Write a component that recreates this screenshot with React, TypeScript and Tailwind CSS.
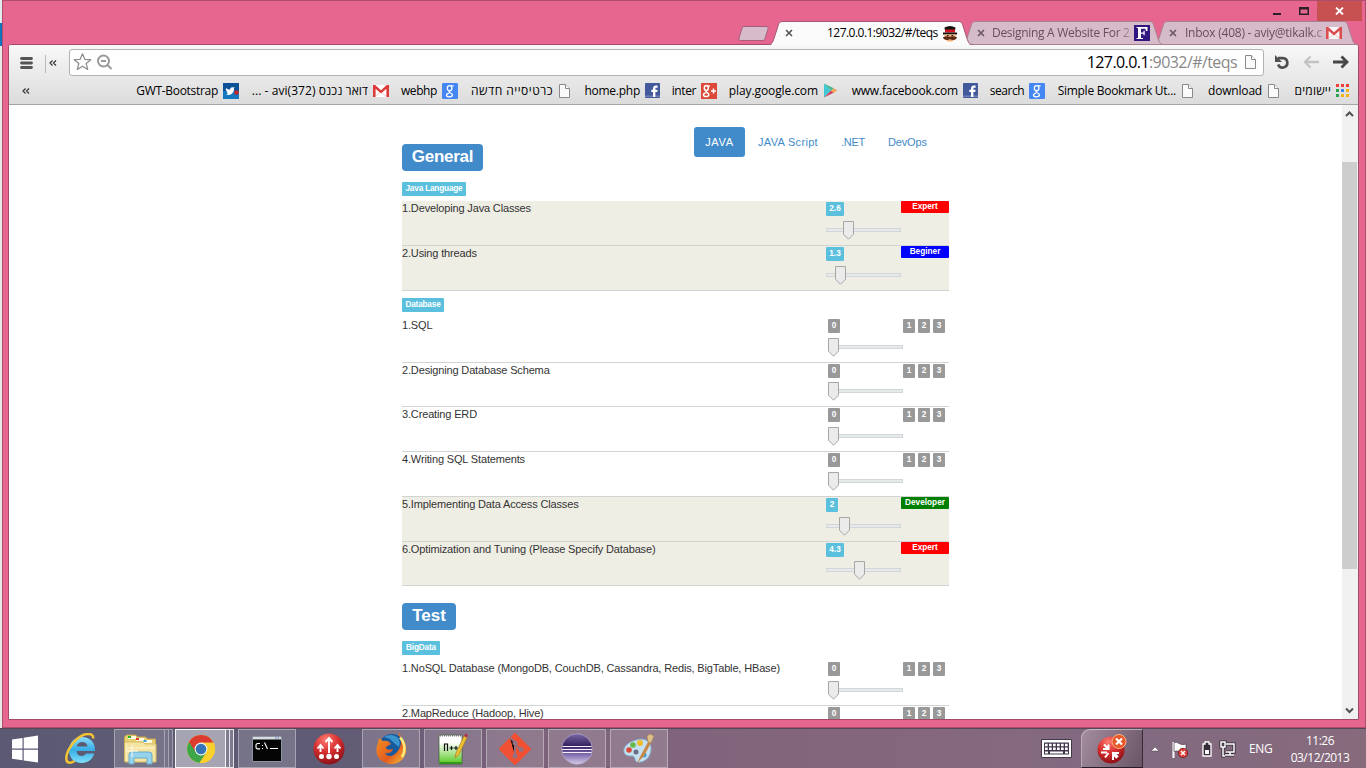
import type { ReactNode } from "react";

const UI = "font-['Open_Sans','Noto_Sans',sans-serif]";
const ARIAL = "font-['Liberation_Sans',sans-serif]";

/* ---------- small icons ---------- */

const PageIcon = () => (
  <svg width="13" height="16" viewBox="0 0 13 16">
    <path d="M1.5 1.5h6l4 4v9h-10z" fill="#fafafa" stroke="#8a8a8a" />
    <path d="M7.5 1.5v4h4" fill="#fff" stroke="#8a8a8a" />
  </svg>
);

const Gmail = ({ faded = false }: { faded?: boolean }) => (
  <svg width="16" height="12" viewBox="0 0 16 12" opacity={faded ? 0.85 : 1}>
    <rect width="16" height="12" fill="#fff" />
    <path d="M0 0h2.2L8 5.3 13.800 0H16v12h-2.600V3.700L8 8.400 2.600 3.700V12H0z" fill="#dd3a3a" />
    <path d="M3 11.500l3.600-3.800M13 11.500L9.400 7.700" stroke="#f0b7b7" strokeWidth=".8" />
  </svg>
);

const GoogleG = () => (
  <svg width="16" height="16" viewBox="0 0 16 16">
    <rect width="16" height="16" rx="1.200" fill="#4486f4" />
    <g fill="none" stroke="#fff" strokeWidth="1.300">
      <ellipse cx="7.600" cy="5.200" rx="2.300" ry="2.500" />
      <path d="M9 2.800h2.600M8 7.900c-1.500.8-1 1.600.5 2.100 2.600.8 2.700 3.700-.8 3.800-4 .1-4.200-3 -.9-3.500" />
    </g>
  </svg>
);

const GooglePlus = () => (
  <svg width="16" height="16" viewBox="0 0 16 16">
    <rect width="16" height="16" fill="#db4a38" />
    <g fill="none" stroke="#fff" strokeWidth="1.500">
      <ellipse cx="5.300" cy="5" rx="2" ry="2.500" />
      <path d="M6.500 3h2.300M5.800 7.700c-1.500.8-1 1.600.4 2.100 2.400.8 2.300 3.600-.8 3.700-3.600.1-3.800-2.900-.8-3.400M10 8h5M12.500 5.500v5" />
    </g>
  </svg>
);

const Facebook = () => (
  <svg width="15" height="15" viewBox="0 0 15 15">
    <rect width="15" height="15" rx=".8" fill="#42599b" />
    <rect y="12.500" width="15" height="1.500" fill="#7082b5" />
    <path d="M8 14V9H6.300V6.800H8V5.300C8 3.300 9.300 2.500 11 2.500h1.600v2.200h-1.300c-.7 0-.9.300-.9.900v1.200h2.200L12.300 9h-1.900v5z" fill="#fff" />
  </svg>
);

const Play = () => (
  <svg width="15" height="15" viewBox="0 0 15 15">
    <path d="M1 .5L8 7.500 1 14.500z" fill="#42c6d4" />
    <path d="M1 .5l9.700 4.700L8 7.500z" fill="#42b98f" />
    <path d="M1 14.500l9.700-4.700L8 7.500z" fill="#cf4561" />
    <path d="M10.700 5.200L14.500 7.500l-3.800 2.300L8 7.500z" fill="#f4a456" />
  </svg>
);

const Twitter = () => (
  <svg width="16" height="16" viewBox="0 0 16 16">
    <rect width="16" height="16" fill="#0b5396" />
    <path d="M0 8h16v8H0z" fill="#1577bd" />
    <path d="M3 5c1.500 1.400 2.800 1.700 4.200 1.600C7.200 5 8.500 4 10 4.500l1.800-.2-.8 1.300c.3 3.600-2.300 6.400-5.500 6.400L3 11.500l2-.9-1.500-1.500 1-.2C3 8 2.500 6.500 3 5z" fill="#fff" />
    <circle cx="13.500" cy="9.500" r="2.300" fill="#c3262e" />
  </svg>
);

const Apps = () => (
  <svg width="14" height="14" viewBox="0 0 14 14">
    <path d="M0 0h3v3H0zM5 0h3v3H5zM10 0h3v3h-3z" fill="#ef3f36" />
    <path d="M0 5h3v3H0zM0 10h3v3H0z" fill="#2aa052" />
    <path d="M5 5h3v3H5z" fill="#3a86f0" />
    <path d="M10 5h3v3h-3zM5 10h3v3H5zM10 10h3v3h-3z" fill="#f5b318" />
  </svg>
);

const Mustache = () => (
  <svg width="16" height="17" viewBox="0 0 16 17">
    <path d="M2.500 2.500Q8-.5 13.500 2.500l-.7 4.500H3.200z" fill="#151010" />
    <path d="M3 4.500h10v3H3z" fill="#d01723" />
    <path d="M1 7.500h14v2H1z" fill="#151010" />
    <path d="M2.500 9.500h11V14L10 16.500H6L2.500 14z" fill="#f2b077" />
    <path d="M8 12c-2-1.500-4 0-7 0 0 3 5 4 7 2 2 2 7 1 7-2-3 0-5-1.500-7 0z" fill="#5b2a17" />
    <path d="M5 10.500h1.500M9.500 10.500H11" stroke="#222" />
  </svg>
);

const TabClose = ({ color }: { color: string }) => (
  <svg width="8" height="8" viewBox="0 0 8 8" className="shrink-0">
    <path d="M1 1l6 6M7 1L1 7" stroke={color} strokeWidth="1.600" />
  </svg>
);

/* ---------- window frame ---------- */

const TabShape = ({ w, fill, stroke, open = false }: { w: number; fill: string; stroke: string; open?: boolean }) => (
  <svg className="absolute inset-0 -z-10" width={w} height="24" viewBox={`0 0 ${w} 24`}>
    <path
      d={`M0 23.500C4 23.500 4.500 21.500 6 17.500L10 5C11 1.500 12 .5 15 .5H${w - 15}C${w - 12} .5 ${w - 11} 1.500 ${w - 10} 5L${w - 6} 17.500C${w - 4.5} 21.500 ${w - 4} 23.500 ${w} 23.500${open ? "" : "z"}`}
      fill={fill}
      stroke={stroke}
    />
    {open && <path d={`M4 23.500H${w - 4}`} stroke={fill} />}
  </svg>
);

const TabStrip = () => (
  <div className={`flex h-6 justify-end text-[12px] ${UI}`}>
    <svg width="34" height="18" viewBox="0 0 34 18" className="-mr-[3px] mt-1">
      <path d="M8 1.500h21c2 0 2.500 1 2 2.500L28 13.500c-.5 1.500-1 2-3 2H4c-2 0-2.500-1-2-2.500L5 3.500C5.500 2 6 1.500 8 1.500z" fill="#d6bccb" stroke="#a75f7d" />
    </svg>
    <div className="relative z-20 flex h-6 w-[205px] items-center pl-[17px] text-black">
      <TabShape w={205} fill="#fbfbfb" stroke="#a45877" open />
      <TabClose color="#555" />
      <span className="ml-[34px] w-[112px] whitespace-nowrap tracking-[-0.53px]">127.0.0.1:9032/#/teqs</span>
      <span className="ml-[3px]"><Mustache /></span>
    </div>
    <div className="relative z-10 -ml-3 flex h-6 w-[203px] items-center pl-4 text-[#6c4c5c]">
      <TabShape w={203} fill="#d6bccb" stroke="#a9808f" />
      <TabClose color="#6c5561" />
      <span className="ml-[7px] w-[141px] whitespace-nowrap tracking-[-0.3px] [mask-image:linear-gradient(to_right,black_125px,transparent_146px)]">Designing A Website For 2</span>
      <svg width="16" height="16" viewBox="0 0 16 16" className="ml-px">
        <rect width="16" height="16" fill="#321680" />
        <path d="M2.500 2h11v4h-1.500l-.7-2.200H7v3.600h2.500V5.800h1.200v4.500H9.500V8.800H7V13h2v1H2.500v-1H4V3H2.500z" fill="#fff" />
      </svg>
    </div>
    <div className="relative z-0 -ml-[11px] flex h-6 w-[205px] items-center pl-4 text-[#6c4c5c]">
      <TabShape w={205} fill="#d6bccb" stroke="#a9808f" />
      <TabClose color="#6c5561" />
      <span className="ml-2 w-[139px] whitespace-nowrap tracking-[-0.24px] [mask-image:linear-gradient(to_right,black_125px,transparent_146px)]">Inbox (408) - aviy@tikalk.c</span>
      <span className="ml-[2px]"><Gmail faded /></span>
    </div>
  </div>
);

const TitleBar = () => (
  <div className="-mr-1 flex h-5 items-start justify-end">
    <svg width="56" height="20" viewBox="0 0 56 20">
      <path d="M12 12h8v2h-8z" fill="#2b2028" />
      <path d="M38 6h10v8H38z M39.500 8.500v4h7v-4z" fill="#2b2028" fillRule="evenodd" />
    </svg>
    <div className="flex h-5 w-[45px] items-center justify-center bg-[#c75050]">
      <svg width="9" height="8" viewBox="0 0 9 8"><path d="M1 .5l7 7M8 .5l-7 7" stroke="#fff" strokeWidth="1.800" /></svg>
    </div>
  </div>
);

const Toolbar = () => (
  <div className="flex h-[33px] items-center">
    <svg width="60" height="32" viewBox="0 0 60 32" className="shrink-0">
      <path d="M12.500 12.500h10M12.500 17h10M12.500 21.500h10" stroke="#555" strokeWidth="2.800" strokeLinecap="round" />
      <path d="M36.500 9v18" stroke="#bbb" />
      <path d="M43.500 14.500l-2.500 2.500 2.500 2.500M47 14.500l-2.500 2.500 2.500 2.500" stroke="#333" strokeWidth="1.200" fill="none" />
    </svg>
    <div className="mt-px flex h-[27px] w-[1195px] items-center rounded-[3px] border border-[#b3b3b3] bg-white">
      <svg width="44" height="24" viewBox="0 0 44 24">
        <path d="M12.500 3.800l2.300 5.500 6 .4-4.600 3.800 1.500 5.900-5.200-3.200-5.200 3.200 1.500-5.900-4.600-3.800 6-.4z" fill="#fff" stroke="#8b8b8b" strokeWidth="1.200" strokeLinejoin="round" />
        <circle cx="33.500" cy="11" r="5.500" fill="none" stroke="#999" strokeWidth="2" />
        <path d="M31 11h5M37.500 15l4 4" stroke="#999" strokeWidth="2" />
      </svg>
      <span className={`ml-auto mr-[7px] whitespace-nowrap text-[16px] tracking-[-0.58px] text-[#888] ${UI}`}>
        <span className="text-black">127.0.0.1</span>:9032/#/teqs
      </span>
      <span className="mr-1.5"><PageIcon /></span>
    </div>
    <svg width="84" height="30" viewBox="0 0 84 30" className="ml-[5px] shrink-0">
      <path d="M9 11.200h4.800a4.700 4.700 0 1 1-4.600 6.300" fill="none" stroke="#505050" strokeWidth="2.700" />
      <path d="M6 8v7h7z" fill="#505050" />
      <path d="M50 15H36M41.500 9.500L36 15l5.500 5.500" fill="none" stroke="#c3c3c3" strokeWidth="2.300" />
      <path d="M64 15h13M72.500 9.500L78 15l-5.500 5.500" fill="none" stroke="#474747" strokeWidth="2.800" />
    </svg>
  </div>
);

type Bookmark = { text: string; icon: ReactNode; cls: string };
const bookmarks: Bookmark[] = [
  { text: "GWT-Bootstrap", icon: <Twitter />, cls: "w-[130px] tracking-[-0.3px]" },
  { text: "... - avi(372) דואר נכנס", icon: <Gmail />, cls: "w-[150px] tracking-[0.07px]" },
  { text: "webhp", icon: <GoogleG />, cls: "w-[69px] tracking-[-0.4px]" },
  { text: "כרטיסייה חדשה", icon: <PageIcon />, cls: "w-[113px] tracking-[0.5px]" },
  { text: "home.php", icon: <Facebook />, cls: "w-[89px] tracking-[-0.25px]" },
  { text: "inter", icon: <GooglePlus />, cls: "w-[57px] tracking-[-0.4px]" },
  { text: "play.google.com", icon: <Play />, cls: "w-[121px] tracking-[-0.1px]" },
  { text: "www.facebook.com", icon: <Facebook />, cls: "w-[140px] tracking-[-0.2px]" },
  { text: "search", icon: <GoogleG />, cls: "w-[67px] tracking-[-0.5px]" },
  { text: "Simple Bookmark Ut...", icon: <PageIcon />, cls: "w-[149px] tracking-[-0.27px]" },
  { text: "download", icon: <PageIcon />, cls: "w-[86px] tracking-[-0.2px]" },
  { text: "יישומים", icon: <Apps />, cls: "w-[70px] tracking-[0.2px]" },
];

const BookmarkBar = () => (
  <div className={`flex h-[26px] items-center pb-px text-[12px] text-black ${UI}`}>
    <svg width="100" height="20" viewBox="0 0 100 20" className="shrink-0">
      <path d="M16.500 7.500L14 10l2.500 2.500M20 7.500L17.500 10l2.500 2.500" stroke="#333" strokeWidth="1.200" fill="none" />
    </svg>
    {bookmarks.map((b) => (
      <div key={b.text} className={`flex shrink-0 items-center justify-end gap-[5px] whitespace-nowrap ${b.cls}`}>
        <span>{b.text}</span>
        <span className="shrink-0">{b.icon}</span>
      </div>
    ))}
  </div>
);

/* ---------- page content ---------- */

type Level = { label: string; cls: string };
const EXPERT: Level = { label: "Expert", cls: "bg-[#f00]" };
const BEGINER: Level = { label: "Beginer", cls: "bg-[#00f]" };
const DEVELOPER: Level = { label: "Developer", cls: "bg-[#008000]" };

type Skill = { text: string; value?: string; level?: Level; thumb?: string; short?: boolean };

const javaSkills: Skill[] = [
  { text: "1.Developing Java Classes", value: "2.6", level: EXPERT, thumb: "ml-[17px]" },
  { text: "2.Using threads", value: "1.3", level: BEGINER, thumb: "ml-[9px]" },
];
const dbSkills: Skill[] = [
  { text: "1.SQL" },
  { text: "2.Designing Database Schema", short: true },
  { text: "3.Creating ERD" },
  { text: "4.Writing SQL Statements" },
  { text: "5.Implementing Data Access Classes", value: "2", level: DEVELOPER, thumb: "ml-[13px]" },
  { text: "6.Optimization and Tuning (Please Specify Database)", value: "4.3", level: EXPERT, thumb: "ml-[28px]", short: true },
];
const bigSkills: Skill[] = [
  { text: "1.NoSQL Database (MongoDB, CouchDB, Cassandra, Redis, BigTable, HBase)" },
  { text: "2.MapReduce (Hadoop, Hive)" },
];

const Slider = ({ thumb }: { thumb?: string }) => (
  <div className="grid h-[19px] w-[75px]">
    <div className="col-start-1 row-start-1 mt-[7px] h-1 border border-[#d3d6d9] bg-[#e6eaea]" />
    <svg width="11" height="19" viewBox="0 0 11 19" className={`z-10 col-start-1 row-start-1 ${thumb ?? ""}`}>
      <path d="M.5.500h10v12.700l-5 5-5-5z" fill="#ebebeb" stroke="#a6a6a6" />
    </svg>
  </div>
);

const tiny = "flex h-[14px] items-center justify-center rounded-[1px] pt-px text-[8.250px] font-bold leading-none text-white";

const Row = ({ s }: { s: Skill }) => {
  const on = !!s.level;
  return (
    <div className={`flex shrink-0 items-start border-b border-[#d2d3d3] ${s.short ? "h-[44px]" : "h-[45px]"} ${on ? "bg-[#efeee5]" : ""}`}>
      <div className="w-[424px] whitespace-nowrap pt-px text-[11px] leading-[13px] tracking-[-0.15px] text-[#333]">{s.text}</div>
      <div className={`flex w-[75px] flex-col pt-px ${on ? "" : "ml-0.5"} ${s.short ? "gap-1" : "gap-[5px]"}`}>
        <div className={`${tiny} ${on ? "bg-[#5bc0de]" : "bg-[#999]"} ${s.value && s.value.length > 1 ? "w-[18px]" : "w-3"}`}>{s.value ?? "0"}</div>
        <Slider thumb={s.thumb} />
      </div>
      {s.level ? (
        <div className={`flex h-3 w-12 items-center justify-center rounded-[1px] pt-px text-[8.250px] font-bold leading-none text-white ${s.level.cls}`}>{s.level.label}</div>
      ) : (
        <div className="flex gap-[3px] pt-px">
          {["1", "2", "3"].map((n) => (
            <div key={n} className={`${tiny} w-3 bg-[#999]`}>{n}</div>
          ))}
        </div>
      )}
    </div>
  );
};

const Heading = ({ children, cls }: { children: string; cls: string }) => (
  <h2 className={`flex h-[27px] shrink-0 items-center justify-center rounded-[4px] bg-[#428bca] pb-0.5 text-[17px] font-bold leading-none text-white ${cls}`}>{children}</h2>
);
const Category = ({ children, cls }: { children: string; cls: string }) => (
  <div className={`${tiny} shrink-0 bg-[#5bc0de] tracking-[-0.2px] ${cls}`}>{children}</div>
);

const Content = () => (
  <div className={`ml-[393px] flex h-[614px] w-[547px] flex-col overflow-hidden ${ARIAL}`}>
    <div className="flex h-[90px] shrink-0 justify-between">
      <div className="pt-[39px]"><Heading cls="w-[81px] tracking-[-0.25px]">General</Heading></div>
      <nav className="mr-[22px] mt-[22px] flex h-[30px] items-center text-[11px] text-[#428bca]">
        <span className="flex h-[30px] w-[51px] items-center justify-center rounded-[3px] bg-[#428bca] tracking-[0.7px] text-white">JAVA</span>
        <span className="ml-[13px] w-[61px] whitespace-nowrap tracking-[0.32px]">JAVA Script</span>
        <span className="ml-[22px] w-[25px] tracking-[-0.3px]">.NET</span>
        <span className="ml-[22px] w-[39px] tracking-[-0.15px]">DevOps</span>
      </nav>
    </div>
    <Category cls="-mt-[13px] w-16">Java Language</Category>
    <div className="mt-[5px] flex shrink-0 flex-col">
      {javaSkills.map((s) => <Row key={s.text} s={s} />)}
    </div>
    <Category cls="mt-[7px] w-[42px]">Database</Category>
    <div className="mt-1.5 flex shrink-0 flex-col">
      {dbSkills.map((s) => <Row key={s.text} s={s} />)}
    </div>
    <Heading cls="mt-[17px] w-[54px]">Test</Heading>
    <Category cls="mt-[11px] w-[38px]">BigData</Category>
    <div className="mt-1.5 flex shrink-0 flex-col">
      {bigSkills.map((s) => <Row key={s.text} s={s} />)}
    </div>
  </div>
);

const Scrollbar = () => (
  <div className="ml-auto flex w-4 flex-col items-center bg-[#f1f1f1]">
    <svg width="16" height="17" viewBox="0 0 16 17"><path d="M4 11l3.500-3.500L11 11" fill="none" stroke="#505050" strokeWidth="2" /></svg>
    <div className="mt-[40px] h-[407px] w-[15px] self-start bg-[#cdcdcd]" />
    <svg width="16" height="17" viewBox="0 0 16 17" className="mt-auto"><path d="M4 6.500l3.500 3.500L11 6.500" fill="none" stroke="#505050" strokeWidth="2" /></svg>
  </div>
);

/* ---------- taskbar ---------- */

const WinLogo = () => (
  <svg width="28" height="28" viewBox="0 0 28 28">
    <path d="M1 4.500l10.500-1.600v10.600H1zM12.700 2.700L27 .5v13H12.700zM1 14.700h10.500v10.600L1 23.700zM12.700 14.700H27v12.800l-14.300-2.100z" fill="#fff" />
  </svg>
);

const IE = () => (
  <svg width="32" height="32" viewBox="0 0 32 32">
    <defs><linearGradient id="ie" x1="0" y1="0" x2="0" y2="1"><stop offset="0" stopColor="#8ddcfb" /><stop offset=".5" stopColor="#35aee8" /><stop offset="1" stopColor="#7fe0f8" /></linearGradient></defs>
    <path d="M30 18H11.500c.2 3.300 2.300 5 5 5 2.200 0 3.700-.9 4.500-2.500h8.200C27.500 26.500 23 30 16.700 30 9 30 4 24.500 4 17.200 4 9.500 9.500 4 17 4c8 0 13.500 5.500 13 14zM22.500 13.500c-.3-2.700-2.200-4.400-5.200-4.400-3 0-5 1.700-5.600 4.400z" fill="url(#ie)" />
    <path d="M28 5.500C29.500-.5 19-.5 12 6 4 13 .5 22 1.500 27c.8 4 5 3 8 1" fill="none" stroke="#f5c432" strokeWidth="2.500" />
  </svg>
);

const Explorer = () => (
  <svg width="34" height="32" viewBox="0 0 34 32">
    <path d="M1.500 4l2-2h9l2 2h8l2 2h8v22H1.500z" fill="#e8cf73" stroke="#c9a94c" />
    <path d="M5 3h8v3H5zM13 5h8v3h-8zM20 7h9v3h-9z" fill="#fffbe5" />
    <path d="M5 3h3v2H5z" fill="#22b323" /><path d="M13 5h3v2h-3z" fill="#e23b31" /><path d="M20.500 7h3v2h-3z" fill="#32a0df" />
    <path d="M2 9h18l2 2h11v18H2z" fill="#f5e4a1" stroke="#d9bd65" />
    <path d="M3 10v18M3 15h29" stroke="#fff7ce" />
    <path d="M6 31V22q0-3 3-3h17q3 0 3 3v9h-5v-6H11v6z" fill="#95d4ec" stroke="#6ba9ca" />
    <path d="M9 12v12M4 18h11" stroke="#fff" strokeWidth=".9" />
  </svg>
);

const Chrome = () => (
  <svg width="30" height="30" viewBox="0 0 30 30">
    <circle cx="15" cy="15" r="14" fill="#f9ce27" />
    <path d="M2.900 8A14 14 0 0 1 27.500 8.800H15L9 18.500z" fill="#dc3b30" />
    <path d="M2.900 8A14 14 0 0 0 13.500 28.900l6.600-10L9.500 17.500z" fill="#3fa549" />
    <path d="M15 8.800h12.500a14 14 0 0 1-14 20.100l6.600-10z" fill="#fad02c" />
    <circle cx="15" cy="15" r="6.400" fill="#f3f3ed" /><circle cx="15" cy="15" r="5.300" fill="#3674b8" />
  </svg>
);

const Cmd = () => (
  <svg width="30" height="26" viewBox="0 0 30 26">
    <path d="M.5.500h29v25H.5z" fill="#050505" stroke="#8b93a0" />
    <path d="M1 1h28v2.500H1z" fill="#d8dce3" /><path d="M23 2h1.500M25.500 2H27" stroke="#5575ba" />
    <path d="M8 7.500H5.200L4 8.700v3l1.200 1.200H8M10.500 9v1M10.500 12v1M12.500 6.500l3 6.500M18 12.500h8" stroke="#fff" fill="none" strokeWidth="1.100" />
  </svg>
);

const RedBall = () => (
  <svg width="34" height="34" viewBox="0 0 34 34">
    <defs><radialGradient id="rb" cx=".4" cy=".2" r=".8"><stop offset="0" stopColor="#fb7d72" /><stop offset=".5" stopColor="#d92f30" /><stop offset="1" stopColor="#8d1118" /></radialGradient></defs>
    <circle cx="17" cy="17" r="15.500" fill="url(#rb)" />
    <path d="M17 21V7M13.500 10L17 6l3.500 4M8.500 20v-6M5.500 16.500l3-3.500 3 3.500M25.500 20v-6M22.500 16.500l3-3.500 3 3.500" stroke="#fff" strokeWidth="1.900" fill="none" />
    <g fill="#fff"><circle cx="9.500" cy="24.500" r="2.500" /><circle cx="17" cy="24.500" r="2.700" /><circle cx="24.500" cy="24.500" r="2.500" /></g>
  </svg>
);

const Firefox = () => (
  <svg width="32" height="32" viewBox="0 0 32 32">
    <defs><linearGradient id="ff" x1="0" y1="0" x2="1" y2="1"><stop offset="0" stopColor="#f49a25" /><stop offset=".6" stopColor="#e35b1f" /><stop offset="1" stopColor="#f8c83b" /></linearGradient></defs>
    <circle cx="17" cy="14" r="13" fill="#17599d" />
    <path d="M9 4q7-4 13 0 4 4 2 10l-5-4-4-4z" fill="#4aa9dc" opacity=".75" />
    <path d="M24 3c8 5 9 15 5 21-4 7-13 9-20 5C1 25 0 17 3 10l1-5 4 3c4-1 6 0 8 3l-5 3c0 3 3 3 7 2-1 4-5 5-8 4 2 4 8 4 12-1 5-5 5-14 2-21z" fill="url(#ff)" />
    <path d="M25 4.500c5 5 6 13 2 19.500" stroke="#fbe97d" strokeWidth="2.500" fill="none" />
  </svg>
);

const Notepad = () => (
  <svg width="30" height="32" viewBox="0 0 30 32">
    <defs><linearGradient id="np" x1="0" y1="0" x2="0" y2="1"><stop offset=".25" stopColor="#fff" /><stop offset="1" stopColor="#55c91f" /></linearGradient></defs>
    <path d="M1 2h23v29H1z" fill="url(#np)" stroke="#3c5a37" strokeWidth=".7" />
    <path d="M2 2.500h21" stroke="#777" strokeWidth="2" strokeDasharray="1 1" />
    <path d="M2 30h21" stroke="#32961b" strokeWidth="2" />
    <path d="M6.500 18v-7h3v7M11.500 15h4M13.500 13v4M16 15h4M18 13v4" stroke="#111" strokeWidth="1.200" fill="none" />
    <path d="M17 25l1-5L26 3l3 1.500-8 17z" fill="#edc133" stroke="#af7c1e" strokeWidth=".7" />
    <path d="M26 3l1.500-2.500L30 2l-1 2.500z" fill="#b2334a" />
  </svg>
);

const Git = () => (
  <svg width="34" height="34" viewBox="0 0 34 34">
    <path d="M17 2L32 17 17 32 2 17z" fill="#f05033" stroke="#f05033" strokeWidth="2" strokeLinejoin="round" />
    <path d="M12 5.500L17 10.500v13M17 12l6 6" stroke="#96707f" strokeWidth="2" />
    <g fill="#96707f"><circle cx="17" cy="11" r="2.500" /><circle cx="17" cy="24" r="2.500" /><circle cx="23" cy="17.500" r="2.500" /></g>
  </svg>
);

const Eclipse = () => (
  <svg width="32" height="32" viewBox="0 0 32 32">
    <defs><linearGradient id="ec" x1="0" y1="0" x2="0" y2="1"><stop offset="0" stopColor="#7a6aa5" /><stop offset=".4" stopColor="#34205f" /><stop offset=".6" stopColor="#6c549f" /><stop offset="1" stopColor="#d6cde9" /></linearGradient></defs>
    <circle cx="16" cy="16" r="15.300" fill="url(#ec)" stroke="#b8acd3" strokeWidth=".7" />
    <path d="M1.500 13.500h29M1 16.500h30M1.500 19.500h29" stroke="#f4f1fa" strokeWidth="1.200" />
  </svg>
);

const Paint = () => (
  <svg width="34" height="32" viewBox="0 0 34 32">
    <path d="M14 7c9-3 16 2 15 10-1 9-8 13-14 12-3-1-1-5-4-6-4 0-8 0-9-4C1 13 7 9 14 7z" fill="#c5e1f1" stroke="#87aeca" />
    <circle cx="7" cy="17" r="2.800" fill="#d94a38" /><circle cx="11" cy="12" r="2.800" fill="#66b948" /><circle cx="18" cy="10" r="3" fill="#f0bc2c" /><circle cx="14" cy="19" r="2.500" fill="#6a6e86" /><circle cx="22" cy="22" r="2.500" fill="#409edc" />
    <path d="M15 30l4-8 7-13 3 1-7 13z" fill="#c98846" /><path d="M26 9l-1-6 3-2 4 2-3 7z" fill="#dec18a" stroke="#a9824e" strokeWidth=".6" />
  </svg>
);

const TaskButton = ({ children, cls = "w-[58px] border-white/35 bg-white/15" }: { children: ReactNode; cls?: string }) => (
  <div className={`flex h-[39px] shrink-0 items-center justify-center border ${cls}`}>{children}</div>
);

const Taskbar = () => (
  <div className={`flex h-10 w-[1366px] items-start border-t border-[#564758] bg-[linear-gradient(90deg,#5c5a73_0px,#605b75_330px,#7c627a_520px,#85677d_900px,#826a80_1150px,#876a7c_1366px)] text-white ${UI}`}>
    <div className="flex h-[39px] w-[51px] shrink-0 items-center justify-center pr-0.5"><WinLogo /></div>
    <div className="flex h-[39px] w-[63px] shrink-0 items-center justify-center pr-1"><IE /></div>
    <TaskButton cls="w-[51px] border-white/35 bg-white/15"><Explorer /></TaskButton>
    <div className="h-[39px] w-1 shrink-0 border-y border-r border-white/35 bg-white/15" />
    <div className="mr-[2px] h-[39px] w-1 shrink-0 border-y border-r border-white/35 bg-white/10" />
    <TaskButton cls="w-[51px] border-white/90 bg-white/45"><Chrome /></TaskButton>
    <div className="h-[39px] w-1 shrink-0 border-y border-r border-white/80 bg-white/20" />
    <div className="mr-1 h-[39px] w-1 shrink-0 border-y border-r border-white/80 bg-white/20" />
    <TaskButton><Cmd /></TaskButton>
    <div className="flex h-[39px] w-[66px] shrink-0 items-center justify-center"><RedBall /></div>
    <div className="flex gap-1">
      <TaskButton><Firefox /></TaskButton>
      <TaskButton><Notepad /></TaskButton>
      <TaskButton><Git /></TaskButton>
      <TaskButton><Eclipse /></TaskButton>
      <TaskButton><Paint /></TaskButton>
    </div>
    <svg width="31" height="20" viewBox="0 0 31 20" className="ml-auto mt-2.5 shrink-0">
      <path d="M.5.500h30v18H.5z" fill="#fff" stroke="#44384a" />
      <path d="M3 3.500h25v12H3z" fill="#40354a" />
      <path d="M4 6h23M4 9.800h23" stroke="#fff" strokeWidth="2.600" strokeDasharray="2.700 1.300" />
      <path d="M4 13.500h3M9 13.500h13M24 13.500h3" stroke="#fff" strokeWidth="2" />
    </svg>
    <div className="ml-[9px] flex h-[39px] w-[62px] shrink-0 items-center justify-center rounded-tl-[9px] border-b border-l border-r border-t border-b-[#291d29] border-l-white/50 border-r-[#352a36] border-t-white/50 bg-[linear-gradient(115deg,#a38d9e,#695466)]">
      <svg width="32" height="32" viewBox="0 0 32 32">
        <circle cx="15" cy="17" r="13.500" fill="url(#rb)" />
        <path d="M8 11.500l4.500 4.500M12.500 11.500V16H7M5 19.500h6M9 24.500l3.500-4.500M17 27v-6l4 4M23 20h-5l4 4" stroke="#fff" strokeWidth="2" fill="none" />
        <circle cx="23" cy="8.500" r="7" fill="#e75729" stroke="#ffb384" />
        <path d="M20 5.500l6 6M26 5.500l-6 6" stroke="#fff" strokeWidth="2.200" />
      </svg>
    </div>
    <svg width="96" height="39" viewBox="0 0 96 39" className="ml-px shrink-0">
      <path d="M7 22h8l-4-4z" fill="#fff" stroke="#4c3d4b" strokeWidth=".5" />
      <path d="M29.500 13v16" stroke="#fff" strokeWidth="2" />
      <path d="M30 13.500q3-1 5 1 3 2 7 .5v8q-4 1-7-.5-2-1-5 0z" fill="#fff" stroke="#4c3d4b" strokeWidth=".7" />
      <circle cx="39" cy="24" r="4.700" fill="#dc4035" stroke="#822532" /><path d="M37 22l4 4M41 22l-4 4" stroke="#fff" strokeWidth="1.500" />
      <path d="M59 15h2v-2h4v2h2v12h-8z" fill="#352b38" stroke="#fff" strokeWidth="1.300" /><path d="M61 21h4v4h-4z" fill="#fff" />
      <path d="M77 13h4v5h-4zM79 18v9h2M82 15h8v8h-8M86 23v3M81 26h9" fill="none" stroke="#352b38" strokeWidth="3.200" />
      <path d="M77 13h4v5h-4zM79 18v9h2M82 15h8v8h-8M86 23v3M81 26h9" fill="none" stroke="#fff" strokeWidth="1.500" />
    </svg>
    <div className="ml-[9px] flex h-[39px] w-6 items-center text-[12px] tracking-[-0.3px]">ENG</div>
    <div className="ml-3.5 mr-[13px] flex h-[39px] w-[66px] flex-col items-center whitespace-nowrap pt-[3px] text-[12px] leading-[17px] tracking-[-0.5px]">
      <span>11:26</span>
      <span>03/12/2013</span>
    </div>
  </div>
);

export default function App() {
  return (
    <div className="flex h-[768px] w-[1366px] flex-col overflow-hidden bg-[#e9e9e9]">
      <div className="flex h-[728px]">
        <div className="flex w-0.5 flex-col">
          <div className="h-[23px] bg-[#e3eaf0]" />
          <div className="h-[23px] bg-[#1173bd]" />
        </div>
        <div className="isolate flex h-[728px] w-[1364px] flex-col border border-[#ad4c6b] bg-[#e6668f] pl-[5px] pr-[7px]">
          <TitleBar />
          <div className="z-10 -mb-px"><TabStrip /></div>
          <div className="flex h-[676px] w-[1351px] flex-col rounded-t-[3px] border border-[#a34a68] bg-white">
            <div className="h-[60px] rounded-t-[2px] border-b border-[#a5a5a5] bg-[linear-gradient(#f8f8f8,#dcdcdc)]">
              <Toolbar />
              <BookmarkBar />
            </div>
            <div className="flex h-[614px]">
              <Content />
              <Scrollbar />
            </div>
          </div>
        </div>
      </div>
      <Taskbar />
    </div>
  );
}
